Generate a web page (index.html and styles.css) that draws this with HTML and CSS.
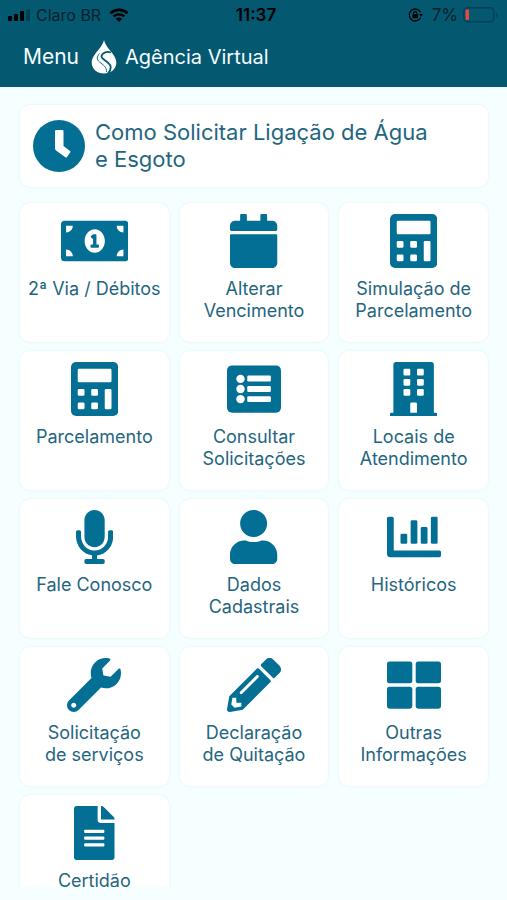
FILE: index.html
```html
<!DOCTYPE html>
<html lang="pt-BR">
<head>
<meta charset="utf-8">
<meta name="viewport" content="width=device-width, initial-scale=1">
<title>Agência Virtual</title>
<link rel="stylesheet" href="styles.css">
</head>
<body>
<header class="header">
  <div class="status">
    <div class="status-side">
      <svg class="signal" viewBox="0 0 23 12" aria-hidden="true"><rect x="0" y="7" width="4" height="5" rx="1"/><rect x="6" y="5" width="4" height="7" rx="1"/><rect x="12" y="2" width="4" height="10" rx="1"/><rect x="18" y="0" width="4" height="12" rx="1" opacity=".25"/></svg>
      <span>Claro BR</span>
      <svg class="wifi" viewBox="0 0 20 14" aria-hidden="true"><path d="M1.500 5.200a12.400 12.400 0 0 1 17 0M4.600 8.400a7.800 7.800 0 0 1 10.800 0" fill="none" stroke="#000" stroke-width="2.600"/><path d="M10 14l-3.200-3.300a4.600 4.600 0 0 1 6.400 0z"/></svg>
    </div>
    <time class="time">11:37</time>
    <div class="status-side status-end">
      <svg class="lock" viewBox="0 0 15 14" aria-hidden="true"><path d="M12.600 4.200A6 6 0 1 0 12.600 9.800" fill="none" stroke="#000" stroke-width="1.300"/><path d="M10.900 6h4.100l-2 2.800z"/><rect x="4.400" y="6.300" width="5.600" height="4" rx=".6"/><path d="M5.500 6.500V5.300a1.700 1.700 0 0 1 3.400 0v1.200" fill="none" stroke="#000" stroke-width="1.100"/></svg>
      <span class="percent">7%</span>
      <svg class="battery" viewBox="0 0 36 16" aria-hidden="true"><rect x=".8" y=".8" width="30" height="14" rx="4" fill="none" stroke="#073f58" stroke-width="1.400"/><path d="M33 5.500c2 .6 2 4.400 0 5z" fill="#073f58"/><rect x="2.500" y="2.500" width="3.500" height="10.600" rx="1" fill="#e8483f"/></svg>
    </div>
  </div>
  <nav class="bar">
    <button class="menu" type="button">Menu</button>
    <svg class="logo" viewBox="0 0 26 34" aria-hidden="true"><path d="M13 0c1.500 6 5.500 9.500 8.500 13.500 2.200 3 3.800 5.700 3.800 9C25.300 29 20 33.500 13 33.500S.7 29 .7 22.500c0-3.300 1.600-6 3.800-9C7.500 9.500 11.500 6 13 0z"/><path d="M20 12.500c-5-1.500-9 .5-9.500 3.500-.5 3.500 8 5.500 9 10 .6 3-.5 5.500-2.500 7.500" fill="none" stroke="#045870" stroke-width="1.800"/><path d="M8.500 13.500C5.500 17 5.500 19.500 8.500 22c3.500 2.800 7.500 5 7 10" fill="none" stroke="#045870" stroke-width=".9"/></svg>
    <h1 class="title">Agência Virtual</h1>
  </nav>
</header>

<main class="content">
  <a class="card banner" href="#ligacao">
    <svg class="clock" viewBox="0 0 52 52" aria-hidden="true"><circle cx="26" cy="26" r="26"/><path class="cut" d="M23 10h6.500q1 0 1 1v15l6.500 5q1 .8.2 1.600L34 37q-.7 1-1.600.300L23 30.500q-1-.8-1-2V11q0-1 1-1z"/></svg>
    <span>Como Solicitar Ligação de Água e Esgoto</span>
  </a>

  <div class="grid">
    <a class="card tile" href="#debitos">
      <svg class="icon" viewBox="0 0 640 512" aria-hidden="true"><path d="M352 288h-16v-88c0-4.420-3.580-8-8-8h-13.580c-4.740 0-9.370 1.400-13.310 4.030l-15.330 10.220a7.994 7.994 0 0 0-2.220 11.090l8.880 13.310a7.994 7.994 0 0 0 11.090 2.220l.47-.31V288h-16c-4.420 0-8 3.580-8 8v16c0 4.420 3.580 8 8 8h64c4.420 0 8-3.580 8-8v-16c0-4.420-3.580-8-8-8zM608 64H32C14.330 64 0 78.330 0 96v320c0 17.670 14.330 32 32 32h576c17.670 0 32-14.330 32-32V96c0-17.670-14.330-32-32-32zM48 400v-64c35.350 0 64 28.650 64 64H48zm0-224v-64h64c0 35.350-28.650 64-64 64zm272 192c-53.020 0-96-50.150-96-112 0-61.860 42.980-112 96-112s96 50.130 96 112c0 61.870-43 112-96 112zm272 32h-64c0-35.350 28.650-64 64-64v64zm0-224c-35.350 0-64-28.650-64-64h64v64z"/></svg>
      <span>2ª Via / Débitos</span>
    </a>
    <a class="card tile" href="#vencimento">
      <svg class="icon" viewBox="0 0 448 512" aria-hidden="true"><path d="M12 192h424c6.600 0 12 5.400 12 12v260c0 26.500-21.500 48-48 48H48c-26.500 0-48-21.500-48-48V204c0-6.600 5.400-12 12-12zm436-44v-36c0-26.500-21.500-48-48-48h-48V12c0-6.600-5.400-12-12-12h-40c-6.600 0-12 5.400-12 12v52H160V12c0-6.600-5.400-12-12-12h-40c-6.600 0-12 5.400-12 12v52H48C21.500 64 0 85.500 0 112v36c0 6.600 5.400 12 12 12h424c6.600 0 12-5.400 12-12z"/></svg>
      <span>Alterar Vencimento</span>
    </a>
    <a class="card tile" href="#simulacao">
      <svg class="icon" viewBox="0 0 448 512" aria-hidden="true"><rect width="448" height="512" rx="48"/><g class="cut"><rect x="64" y="64" width="320" height="128" rx="13"/><rect x="64" y="256" width="64" height="64" rx="13"/><rect x="192" y="256" width="64" height="64" rx="13"/><rect x="64" y="384" width="64" height="64" rx="13"/><rect x="192" y="384" width="64" height="64" rx="13"/><rect x="320" y="256" width="64" height="192" rx="13"/></g></svg>
      <span>Simulação de Parcelamento</span>
    </a>
    <a class="card tile" href="#parcelamento">
      <svg class="icon" viewBox="0 0 448 512" aria-hidden="true"><rect width="448" height="512" rx="48"/><g class="cut"><rect x="64" y="64" width="320" height="128" rx="13"/><rect x="64" y="256" width="64" height="64" rx="13"/><rect x="192" y="256" width="64" height="64" rx="13"/><rect x="64" y="384" width="64" height="64" rx="13"/><rect x="192" y="384" width="64" height="64" rx="13"/><rect x="320" y="256" width="64" height="192" rx="13"/></g></svg>
      <span>Parcelamento</span>
    </a>
    <a class="card tile" href="#solicitacoes">
      <svg class="icon" viewBox="0 0 512 512" aria-hidden="true"><rect y="32" width="512" height="448" rx="48"/><g class="cut"><circle cx="128" cy="160" r="40"/><circle cx="128" cy="256" r="40"/><circle cx="128" cy="352" r="40"/><rect x="192" y="128" width="224" height="56" rx="12"/><rect x="192" y="228" width="224" height="56" rx="12"/><rect x="192" y="324" width="224" height="56" rx="12"/></g></svg>
      <span>Consultar Solicitações</span>
    </a>
    <a class="card tile" href="#locais">
      <svg class="icon" viewBox="0 0 448 512" aria-hidden="true"><path d="M436 480h-20V24c0-13.300-10.700-24-24-24H56C42.700 0 32 10.700 32 24v456H12c-6.600 0-12 5.400-12 12v20h448v-20c0-6.600-5.400-12-12-12z"/><g class="cut"><rect x="128" y="64" width="64" height="64" rx="12"/><rect x="256" y="64" width="64" height="64" rx="12"/><rect x="128" y="160" width="64" height="64" rx="12"/><rect x="256" y="160" width="64" height="64" rx="12"/><rect x="128" y="256" width="64" height="64" rx="12"/><rect x="256" y="256" width="64" height="64" rx="12"/><path d="M192 480v-84q0-12 12-12h40q12 0 12 12v84z"/></g></svg>
      <span>Locais de Atendimento</span>
    </a>
    <a class="card tile" href="#contato">
      <svg class="icon" viewBox="0 0 352 512" aria-hidden="true"><path d="M176 352c53.020 0 96-42.980 96-96V96c0-53.020-42.980-96-96-96S80 42.980 80 96v160c0 53.020 42.980 96 96 96zm160-160h-16c-8.840 0-16 7.160-16 16v48c0 74.800-64.490 134.820-140.790 127.380C96.710 376.890 48 317.110 48 250.300V208c0-8.840-7.160-16-16-16H16c-8.840 0-16 7.160-16 16v40.160c0 89.640 63.970 169.550 152 181.690V464H96c-8.840 0-16 7.160-16 16v16c0 8.840 7.160 16 16 16h160c8.840 0 16-7.160 16-16v-16c0-8.840-7.160-16-16-16h-56v-33.770C285.710 418.470 352 344.900 352 256v-48c0-8.840-7.160-16-16-16z"/></svg>
      <span>Fale Conosco</span>
    </a>
    <a class="card tile" href="#cadastro">
      <svg class="icon" viewBox="0 0 448 512" aria-hidden="true"><path d="M224 256c70.700 0 128-57.300 128-128S294.700 0 224 0 96 57.300 96 128s57.300 128 128 128zm89.600 32h-16.700c-22.200 10.200-46.900 16-72.900 16s-50.600-5.800-72.900-16h-16.700C60.200 288 0 348.200 0 422.400V464c0 26.500 21.500 48 48 48h352c26.500 0 48-21.500 48-48v-41.600c0-74.200-60.200-134.400-134.400-134.400z"/></svg>
      <span>Dados Cadastrais</span>
    </a>
    <a class="card tile" href="#historicos">
      <svg class="icon" viewBox="0 0 512 512" aria-hidden="true"><path d="M496 384H64V80c0-8.840-7.160-16-16-16H16C7.160 64 0 71.160 0 80v336c0 17.670 14.330 32 32 32h464c8.840 0 16-7.160 16-16v-32c0-8.840-7.160-16-16-16z"/><rect x="128" y="224" width="64" height="96" rx="13"/><rect x="224" y="96" width="64" height="224" rx="13"/><rect x="320" y="160" width="64" height="160" rx="13"/><rect x="416" y="64" width="64" height="256" rx="13"/></svg>
      <span>Históricos</span>
    </a>
    <a class="card tile" href="#servicos">
      <svg class="icon" viewBox="0 0 512 512" aria-hidden="true"><path d="M507.730 109.100c-2.240-9.030-13.540-12.090-20.120-5.510l-74.360 74.360-67.880-11.310-11.310-67.880 74.360-74.360c6.620-6.620 3.430-17.900-5.660-20.160-47.380-11.740-99.550.91-136.580 37.930-39.640 39.640-50.550 97.100-34.050 147.200L18.740 402.760c-24.990 24.990-24.990 65.510 0 90.500 24.990 24.990 65.510 24.990 90.500 0l213.210-213.210c50.120 16.710 107.470 5.680 147.370-34.220 37.070-37.070 49.700-89.320 37.910-136.730zM64 472c-13.250 0-24-10.750-24-24 0-13.260 10.750-24 24-24s24 10.740 24 24c0 13.250-10.750 24-24 24z"/></svg>
      <span>Solicitação<br>de serviços</span>
    </a>
    <a class="card tile" href="#quitacao">
      <svg class="icon" viewBox="0 0 512 512" aria-hidden="true"><path d="M497.900 142.100l-46.100 46.100c-4.700 4.700-12.300 4.700-17 0l-111-111c-4.700-4.700-4.700-12.300 0-17l46.100-46.100c18.700-18.700 49.100-18.700 67.900 0l60.100 60.100c18.800 18.700 18.800 49.100 0 67.900zM284.200 99.800L21.600 362.400.4 483.900c-2.900 16.400 11.400 30.600 27.800 27.800l121.500-21.300 262.600-262.600c4.700-4.700 4.700-12.300 0-17l-111-111c-4.800-4.700-12.400-4.700-17.100 0zM124.100 339.900c-5.500-5.500-5.500-14.300 0-19.800l154-154c5.500-5.500 14.300-5.500 19.800 0s5.500 14.300 0 19.800l-154 154c-5.500 5.500-14.300 5.500-19.800 0zM88 424h48v36.300l-64.500 11.300-31.100-31.100L51.700 376H88v48z"/></svg>
      <span>Declaração<br>de Quitação</span>
    </a>
    <a class="card tile" href="#informacoes">
      <svg class="icon" viewBox="0 0 512 512" aria-hidden="true"><rect y="32" width="240" height="208" rx="24"/><rect x="272" y="32" width="240" height="208" rx="24"/><rect y="272" width="240" height="208" rx="24"/><rect x="272" y="272" width="240" height="208" rx="24"/></svg>
      <span>Outras Informações</span>
    </a>
    <a class="card tile" href="#certidao">
      <svg class="icon" viewBox="0 0 384 512" aria-hidden="true"><path d="M224 136V0H24C10.700 0 0 10.700 0 24v464c0 13.300 10.700 24 24 24h336c13.300 0 24-10.700 24-24V160H248c-13.200 0-24-10.800-24-24zm160-14.100v6.100H256V0h6.100c6.400 0 12.500 2.500 17 7l97.900 98c4.500 4.500 7 10.600 7 16.900z"/><g class="cut"><rect x="96" y="224" width="192" height="32" rx="10"/><rect x="96" y="288" width="192" height="32" rx="10"/><rect x="96" y="352" width="192" height="32" rx="10"/></g></svg>
      <span>Certidão</span>
    </a>
  </div>
</main>
</body>
</html>
```
FILE: styles.css
```css
* {
  box-sizing: border-box;
}

body {
  margin: 0;
  height: 100vh;
  display: flex;
  flex-direction: column;
  background: #f5ffff;
  color: #1f6680;
  font-family: Inter, "Liberation Sans", sans-serif;
}

.header {
  flex: none;
  padding-bottom: 11px;
  background: #045870;
}

/* Phone status line */
.status {
  display: grid;
  grid-template-columns: 1fr auto 1fr;
  align-items: center;
  height: 30px;
  padding: 0 8px;
  color: #04222e;
  font-size: 16px;
}

.status-side {
  display: flex;
  align-items: center;
  gap: 5px;
}

.status-end {
  justify-content: flex-end;
}

.time {
  padding-left: 5px;
  color: #000;
  font-size: 17px;
  font-weight: 600;
}

.signal {
  width: 23px;
  height: 12px;
}

.wifi {
  width: 20px;
  height: 14px;
  margin-left: 3px;
}

.lock {
  width: 15px;
  height: 14px;
  margin-right: 4px;
}

.percent {
  font-size: 17px;
}

.battery {
  width: 36px;
  height: 16px;
}

/* App bar */
.bar {
  display: flex;
  align-items: center;
  height: 46px;
  padding-top: 8px;
  padding-left: 23px;
  color: #f4fcff;
}

.menu {
  margin: 0;
  padding: 0;
  border: 0;
  background: none;
  color: inherit;
  font: 21px/28px Inter, "Liberation Sans", sans-serif;
  cursor: pointer;
}

.logo {
  width: 26px;
  height: 34px;
  margin: 0 8px 0 12px;
  fill: #fff;
}

.title {
  margin: 0;
  font-size: 20px;
  font-weight: 400;
  line-height: 28px;
}

/* Scrollable menu */
.content {
  flex: 1;
  min-height: 0;
  margin-bottom: 13px;
  padding: 18px 19px 0 20px;
  overflow: hidden;
}

.card {
  border-radius: 10px;
  background: #fff;
  box-shadow: 0 0 3px rgba(60, 110, 120, 0.1);
  color: inherit;
  text-decoration: none;
}

.banner {
  display: flex;
  align-items: center;
  gap: 10px;
  margin-bottom: 16px;
  padding: 14px 56px 14px 13px;
  font-size: 22px;
  line-height: 27px;
}

.clock {
  flex: none;
  width: 52px;
  height: 52px;
  fill: #046f94;
}

.grid {
  display: grid;
  grid-template-columns: repeat(3, minmax(0, 1fr));
  gap: 9px 11px;
}

.tile {
  display: flex;
  flex-direction: column;
  align-items: center;
  gap: 10px;
  min-height: 139px;
  padding: 11px 4px;
  font-size: 18px;
  line-height: 22px;
  text-align: center;
}

.icon {
  flex: none;
  height: 54px;
  fill: #046f94;
}

.cut {
  fill: #fff;
}
```
